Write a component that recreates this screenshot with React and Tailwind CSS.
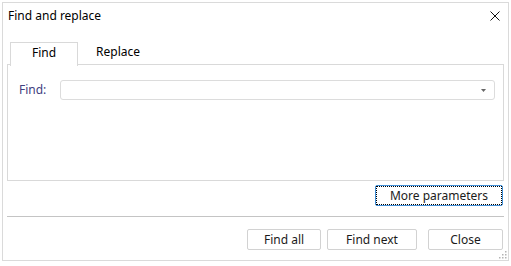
import React, { useState } from 'react'

const font = { fontFamily: '"Segoe UI", "Noto Sans", sans-serif' }

const Button = ({ children, className = '' }) => (
  <button className={`h-[21px] bg-white border border-[#d2d2d2] rounded-[2px] text-[12px] leading-none text-[#1b1b1b] ${className}`}>
    {children}
  </button>
)

const Grip = () => (
  <svg width="9" height="9" viewBox="0 0 9 9" className="absolute right-[1px] bottom-[1px]">
    {[[7, 1], [7, 4], [4, 4], [7, 7], [4, 7], [1, 7]].map(([x, y]) => (
      <rect key={`${x}-${y}`} x={x} y={y} width="1.5" height="1.5" fill="#b4b4b4" />
    ))}
  </svg>
)

const App = () => {
  const [tab, setTab] = useState('find')

  return (
    <div className="w-[511px] h-[266px] bg-white pt-[2px] pl-[2px]" style={font}>
      <div className="relative w-[507px] h-[259px] border border-[#dadada] flex flex-col">
        {/* title */}
        <div className="h-[26px] flex items-center justify-between pl-[5px] pr-[8px]">
          <span className="text-[12px] text-black">Find and replace</span>
          <svg width="10" height="10" viewBox="0 0 10 10">
            <path d="M0.5 0.5L9.5 9.5M9.5 0.5L0.5 9.5" stroke="#111" strokeWidth="1" />
          </svg>
        </div>

        <div className="px-[4px] mt-[13px] flex flex-col">
          {/* tabs */}
          <div className="flex h-[23px] border-b border-[#d9d9d9] pl-[3px]">
            <button
              onClick={() => setTab('find')}
              className={`w-[68px] h-[23px] pb-[3px] text-[12px] text-black ${tab === 'find' ? 'bg-white border border-b-0 border-[#d9d9d9] h-[24px]' : ''}`}
            >
              Find
            </button>
            <button
              onClick={() => setTab('replace')}
              className={`w-[80px] h-[23px] pb-[3px] text-[12px] text-black ${tab === 'replace' ? 'bg-white border border-b-0 border-[#d9d9d9] h-[24px]' : ''}`}
            >
              Replace
            </button>
          </div>

          {/* panel */}
          <div className="h-[116px] border-x border-b border-[#d9d9d9] pt-[15px] pl-[11px] pr-[8px]">
            <div className="flex items-center">
              <span className="w-[41px] text-[12px] text-[#41407f]">Find:</span>
              <div className="flex-1 h-[20px] border border-[#dcdcdc] rounded-[3px] flex items-center justify-end pr-[8px]">
                <svg width="5" height="3" viewBox="0 0 5 3">
                  <path d="M0 0H5L2.5 3Z" fill="#666" />
                </svg>
              </div>
            </div>
          </div>

          <div className="flex justify-end mt-[4px] pr-[1px]">
            <button className="relative w-[128px] h-[21px] bg-white border border-[#3f8fd8] rounded-[2px] text-[12px] leading-none text-[#1b1b1b]">
              <span className="absolute inset-0 border border-dotted border-black" />
              More parameters
            </button>
          </div>

          <div className="mt-[10px] h-px bg-[#c4c4c4]" />

          <div className="flex justify-end mt-[12px] pr-[1px]">
            <Button className="w-[74px]">Find all</Button>
            <Button className="w-[90px] ml-[6px]">Find next</Button>
            <Button className="w-[75px] ml-[11px]">Close</Button>
          </div>
        </div>
        <Grip />
      </div>
    </div>
  )
}

export default App
